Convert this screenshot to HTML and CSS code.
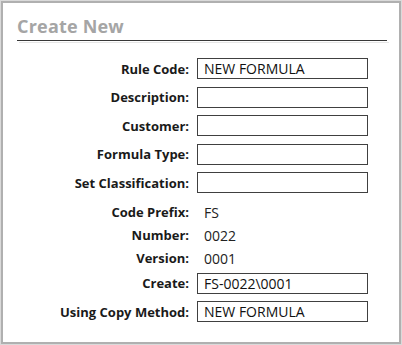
FILE: index.html
```html
<!DOCTYPE html>
<html lang="en">
<head>
  <meta charset="UTF-8" />
  <meta name="viewport" content="width=device-width, initial-scale=1.0" />
  <title>Create New</title>
  <link rel="stylesheet" href="styles.css">
</head>
<body>

  <div class="frame">
    <div class="panel">
      <h1 class="title">Create New</h1>
      <div class="rule"></div>

      <div class="form">
        <label class="lbl">Rule Code:</label>
        <div class="box">NEW FORMULA</div>

        <label class="lbl">Description:</label>
        <div class="box"></div>

        <label class="lbl">Customer:</label>
        <div class="box"></div>

        <label class="lbl">Formula Type:</label>
        <div class="box"></div>

        <label class="lbl">Set Classification:</label>
        <div class="box"></div>

        <label class="lbl text-row">Code Prefix:</label>
        <div class="val text-row">FS</div>

        <label class="lbl text-row">Number:</label>
        <div class="val text-row">0022</div>

        <label class="lbl text-row">Version:</label>
        <div class="val text-row">0001</div>

        <label class="lbl after-text">Create:</label>
        <div class="box after-text">FS-0022\0001</div>

        <label class="lbl">Using Copy Method:</label>
        <div class="box">NEW FORMULA</div>
      </div>
    </div>
  </div>

</body>
</html>
```

FILE: styles.css
```css
* {
  box-sizing: border-box;
  margin: 0;
  padding: 0;
}

body {
  width: 402px;
  height: 345px;
  background: white;
  font-family: 'Open Sans', sans-serif;
  overflow: hidden;
}

.frame {
  height: 345px;
  border: 1px solid #dadada;
}

.panel {
  height: 100%;
  border: 2px solid #b0b0b0;
  padding: 0 10px 0 14px;
}

.title {
  font-size: 18px;
  font-weight: bold;
  color: #a5a5a5;
  line-height: 22px;
  padding-top: 12px;
  letter-spacing: 0.2px;
}

.rule {
  margin-top: 3px;
  width: 370px;
  height: 1px;
  background: #383838;
  box-shadow: 2px 2px 0 #e6e6e6;
}

.form {
  display: grid;
  grid-template-columns: 172px 171px;
  column-gap: 8px;
  margin-top: 17px;
  font-size: 13px;
}

.lbl {
  height: 21px;
  margin-bottom: 7.5px;
  display: flex;
  align-items: center;
  justify-content: flex-end;
  font-weight: bold;
  color: #1a1a1a;
  white-space: nowrap;
}

.box {
  height: 21px;
  margin-bottom: 7.5px;
  border: 1px solid #404040;
  padding-left: 6px;
  display: flex;
  align-items: center;
  font-size: 14px;
  color: #111;
  white-space: nowrap;
}

.val {
  display: flex;
  align-items: center;
  padding-left: 7px;
  font-size: 14px;
  color: #222;
}

.text-row {
  height: 23px;
  margin-bottom: 0;
}

.after-text {
  margin-top: 3px;
}
```
